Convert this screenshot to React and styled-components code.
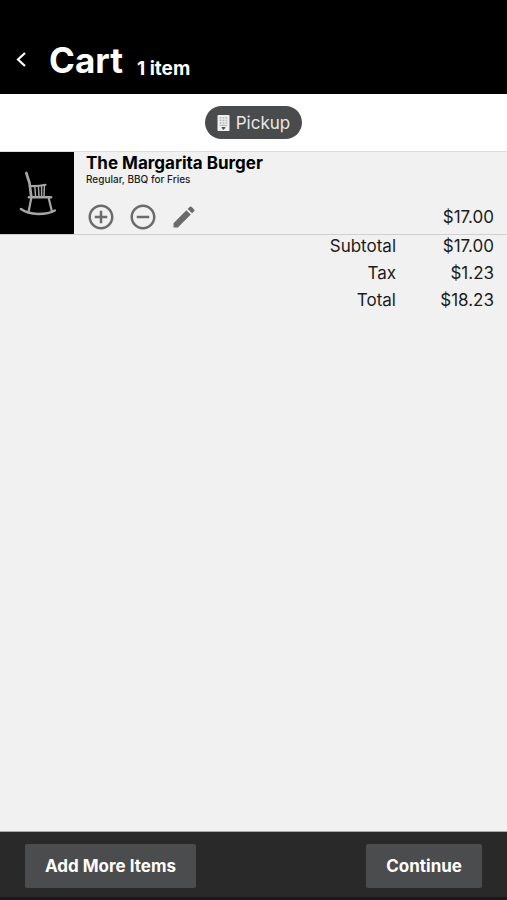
import styled, { createGlobalStyle } from "styled-components";
import {
  MdAddCircleOutline,
  MdRemoveCircleOutline,
  MdEdit,
} from "react-icons/md";

const GlobalStyle = createGlobalStyle`
  * {
    box-sizing: border-box;
  }

  body {
    margin: 0;
    background-color: #f1f1f1;
    color: #1c1c1c;
    font-family: Inter, "Liberation Sans", sans-serif;
    font-size: 16px;
  }

  button {
    font-family: inherit;
    border: none;
    cursor: pointer;
  }
`;

const Page = styled.div`
  min-height: 100vh;
  display: flex;
  flex-direction: column;
`;

const Header = styled.header`
  display: flex;
  align-items: flex-end;
  background-color: black;
  color: white;
  padding: 38px 12px 12px;
`;

const BackButton = styled.button`
  display: flex;
  align-self: center;
  padding: 0;
  margin-right: 18px;
  background: none;
  color: white;
`;

const Title = styled.h1`
  margin: 0 14px 0 0;
  font-size: 35px;
  font-weight: 700;
  line-height: 44px;
`;

const ItemCount = styled.span`
  font-size: 19px;
  font-weight: 700;
  line-height: 27px;
`;

const OrderTypeBar = styled.div`
  display: flex;
  justify-content: center;
  padding: 12px;
  background-color: white;
  border-bottom: 1px solid #dcdcdc;
`;

const OrderTypeButton = styled.button`
  display: flex;
  align-items: center;
  gap: 6px;
  height: 33px;
  padding: 0 12px;
  border-radius: 17px;
  background-color: #4a4b4c;
  color: #e8e8e8;
  font-size: 17px;
`;

const CartList = styled.ul`
  margin: 0;
  padding: 0;
  list-style: none;
`;

const CartItem = styled.li`
  display: flex;
  height: 83px;
  border-bottom: 1px solid #d0d0d0;
`;

const Thumbnail = styled.div`
  flex: 0 0 74px;
  background-color: black;
`;

const ItemBody = styled.div`
  flex: 1;
  display: flex;
  flex-direction: column;
  padding: 0 13px 0 12px;
`;

const ItemName = styled.h2`
  margin: 0;
  color: black;
  font-size: 17px;
  font-weight: 700;
  line-height: 22px;
`;

const ItemOptions = styled.p`
  margin: 0;
  font-size: 10px;
  font-weight: 500;
  line-height: 11px;
`;

const ItemFooter = styled.div`
  display: flex;
  align-items: center;
  justify-content: space-between;
  margin-top: auto;
  padding-bottom: 2px;
`;

const ItemActions = styled.div`
  display: flex;
  align-items: center;
  gap: 12px;
`;

const IconButton = styled.button`
  display: flex;
  padding: 0;
  background: none;
  color: #6b6b6b;
`;

const Price = styled.span`
  font-size: 17px;
`;

const Totals = styled.table`
  margin-left: auto;
  margin-right: 13px;
  border-collapse: collapse;
  font-size: 17px;
  line-height: 22px;
  text-align: right;

  th,
  td {
    padding: 0 0 5px;
    font-weight: 400;
    text-align: right;
  }

  td {
    width: 98px;
  }
`;

const Footer = styled.footer`
  display: flex;
  justify-content: space-between;
  margin-top: auto;
  padding: 12px 25px 9px;
  background-color: #292929;
  border-top: 1px solid #a8a8a8;
  border-bottom: 3px solid #1e1619;
`;

const FooterButton = styled.button`
  height: 44px;
  padding: 0 20px;
  border-radius: 2px;
  background-color: #4b4c4d;
  color: white;
  font-size: 17px;
  font-weight: 700;
`;

const totals = [
  { label: "Subtotal", amount: "$17.00" },
  { label: "Tax", amount: "$1.23" },
  { label: "Total", amount: "$18.23" },
];

function BackIcon() {
  return (
    <svg width="19" height="22" viewBox="0 0 19 22" fill="none" aria-hidden="true">
      <path d="M13 4 L6 10.5 L13 17" stroke="currentColor" strokeWidth="2.2" />
    </svg>
  );
}

function BuildingIcon() {
  return (
    <svg width="13" height="16" viewBox="0 0 13 16" aria-hidden="true">
      <rect x="0.5" width="12" height="16" rx="0.8" fill="#f0f0f0" />
      <g fill="#b4b5b6">
        {[2, 4.6, 7.2].map((y) =>
          [2.7, 5.6, 8.5].map((x) => (
            <rect key={`${x}-${y}`} x={x} y={y} width="1.8" height="1.5" />
          ))
        )}
        <rect x="2.7" y="9.8" width="7.6" height="1.2" />
      </g>
      <path d="M4.7 12 H8.3 V13 L6.5 15 L4.7 13 Z" fill="#4a4b4c" />
    </svg>
  );
}

function RockingChair() {
  return (
    <svg
      width="74"
      height="82"
      viewBox="0 0 74 82"
      fill="none"
      stroke="#a6a6a6"
      strokeLinecap="round"
      strokeLinejoin="round"
      aria-hidden="true"
    >
      <path d="M26.3 21 L29.5 31 L31.3 45" strokeWidth="2.7" />
      <path d="M30.5 34 Q38 34.5 45.5 32.8" strokeWidth="2.2" />
      <path d="M34.8 34.5 L35.6 44.5 M38.4 34.5 L39 44.5 M41.6 34 V44.5 M44.4 33.5 L44 44.5" strokeWidth="1.5" />
      <path d="M29 45.3 H51" strokeWidth="2.6" />
      <path d="M31.3 46 L28.5 60 M48.7 46 L52 60" strokeWidth="2.2" />
      <path d="M21 57 Q27 61.5 38 62 Q49 62 54.8 58.5" strokeWidth="2.6" />
    </svg>
  );
}

function App() {
  return (
    <>
      <GlobalStyle />
      <Page>
        <Header>
          <BackButton aria-label="Back">
            <BackIcon />
          </BackButton>
          <Title>Cart</Title>
          <ItemCount>1 item</ItemCount>
        </Header>

        <OrderTypeBar>
          <OrderTypeButton>
            <BuildingIcon />
            Pickup
          </OrderTypeButton>
        </OrderTypeBar>

        <main>
          <CartList>
            <CartItem>
              <Thumbnail>
                <RockingChair />
              </Thumbnail>
              <ItemBody>
                <ItemName>The Margarita Burger</ItemName>
                <ItemOptions>Regular, BBQ for Fries</ItemOptions>
                <ItemFooter>
                  <ItemActions>
                    <IconButton aria-label="Add one">
                      <MdAddCircleOutline size={30} />
                    </IconButton>
                    <IconButton aria-label="Remove one">
                      <MdRemoveCircleOutline size={30} />
                    </IconButton>
                    <IconButton aria-label="Edit item">
                      <MdEdit size={28} />
                    </IconButton>
                  </ItemActions>
                  <Price>$17.00</Price>
                </ItemFooter>
              </ItemBody>
            </CartItem>
          </CartList>

          <Totals>
            <tbody>
              {totals.map(({ label, amount }) => (
                <tr key={label}>
                  <th scope="row">{label}</th>
                  <td>{amount}</td>
                </tr>
              ))}
            </tbody>
          </Totals>
        </main>

        <Footer>
          <FooterButton>Add More Items</FooterButton>
          <FooterButton>Continue</FooterButton>
        </Footer>
      </Page>
    </>
  );
}

export default App;
